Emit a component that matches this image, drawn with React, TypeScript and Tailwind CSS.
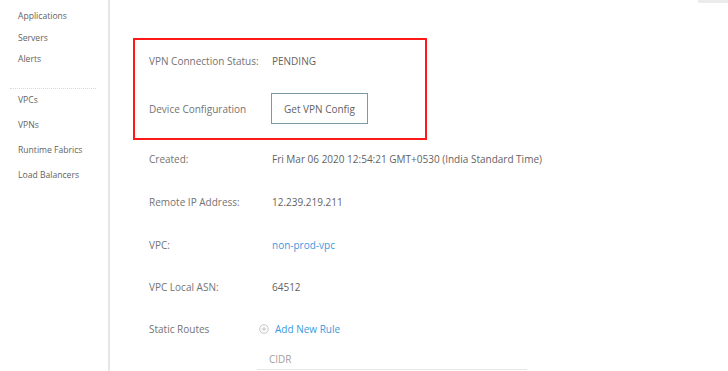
import React from "react";

const navTop = ["Applications", "Servers", "Alerts"];
const navBottom = ["VPCs", "VPNs", "Runtime Fabrics", "Load Balancers"];

const Row = ({ label, children, h }: { label: string; children: React.ReactNode; h: string }) => (
  <div className={`flex items-start ${h}`}>
    <div className="w-[123px] shrink-0 text-[#737373]">{label}</div>
    <div className="text-[#636363]">{children}</div>
  </div>
);

const App = () => {
  return (
    <div
      className="flex w-[728px] h-[371px] overflow-hidden bg-white text-[10px] leading-4"
      style={{ fontFamily: '"Open Sans", "Noto Sans", sans-serif' }}
    >
      <aside className="w-[110px] shrink-0 border-r-2 border-[#e6e6e6] pt-[8px] text-[8.6px]">
        <ul className="pl-[18px] text-[#636363]">
          {navTop.map((n) => (
            <li key={n} className="h-[21.5px]">{n}</li>
          ))}
        </ul>
        <div className="ml-[10px] mr-[12px] mt-[15px] border-t border-dotted border-[#d9d9d9]" />
        <ul className="pl-[18px] pt-[3px] text-[#636363]">
          {navBottom.map((n) => (
            <li key={n} className="h-[25.3px]">{n}</li>
          ))}
        </ul>
      </aside>

      <main className="flex-1 flex flex-col">
        <div className="flex justify-end">
          <div className="w-[30px] h-[3px] bg-[#ececec]" />
        </div>
        <div className="ml-[23px] mt-[35px] w-[294px] border-2 border-[#ff1a1a] px-[14px]">
          <div className="flex items-center h-[39px] pt-[2px]">
            <div className="w-[123px] shrink-0 text-[#737373]">VPN Connection Status:</div>
            <div className="text-[#636363]">PENDING</div>
          </div>
          <div className="flex items-center h-[59px]">
            <div className="w-[122px] shrink-0 text-[#737373]">Device Configuration</div>
            <button className="h-[31px] px-[12px] border border-[#7d98a6] text-[#636363] bg-white">
              Get VPN Config
            </button>
          </div>
        </div>

        <div className="ml-[39px] pt-[11px]">
          <Row label="Created:" h="h-[43px]">
            Fri Mar 06 2020 12:54:21 GMT+0530 (India Standard Time)
          </Row>
          <Row label="Remote IP Address:" h="h-[43px]">12.239.219.211</Row>
          <Row label="VPC:" h="h-[42px]">
            <span className="text-[#3a9ae0]">non-prod-vpc</span>
          </Row>
          <Row label="VPC Local ASN:" h="h-[42px]">64512</Row>
          <div className="flex items-start h-[22px]">
            <div className="w-[110px] shrink-0 text-[#737373]">Static Routes</div>
            <div className="flex items-center gap-[6px] text-[#3a9ae0]">
              <svg width="10" height="10" viewBox="0 0 10 10" fill="none" stroke="#c4c4c4" strokeWidth="1">
                <circle cx="5" cy="5" r="4.3" />
                <path d="M5 2.6v4.8M2.6 5h4.8" />
              </svg>
              <span>Add New Rule</span>
            </div>
          </div>
          <div className="ml-[108px] w-[270px] border-b border-[#e8e8e8] pl-[12px] pt-[8px] pb-[2px] text-[#a0a0a0]">
            CIDR
          </div>
        </div>
      </main>
    </div>
  );
};

export default App;
